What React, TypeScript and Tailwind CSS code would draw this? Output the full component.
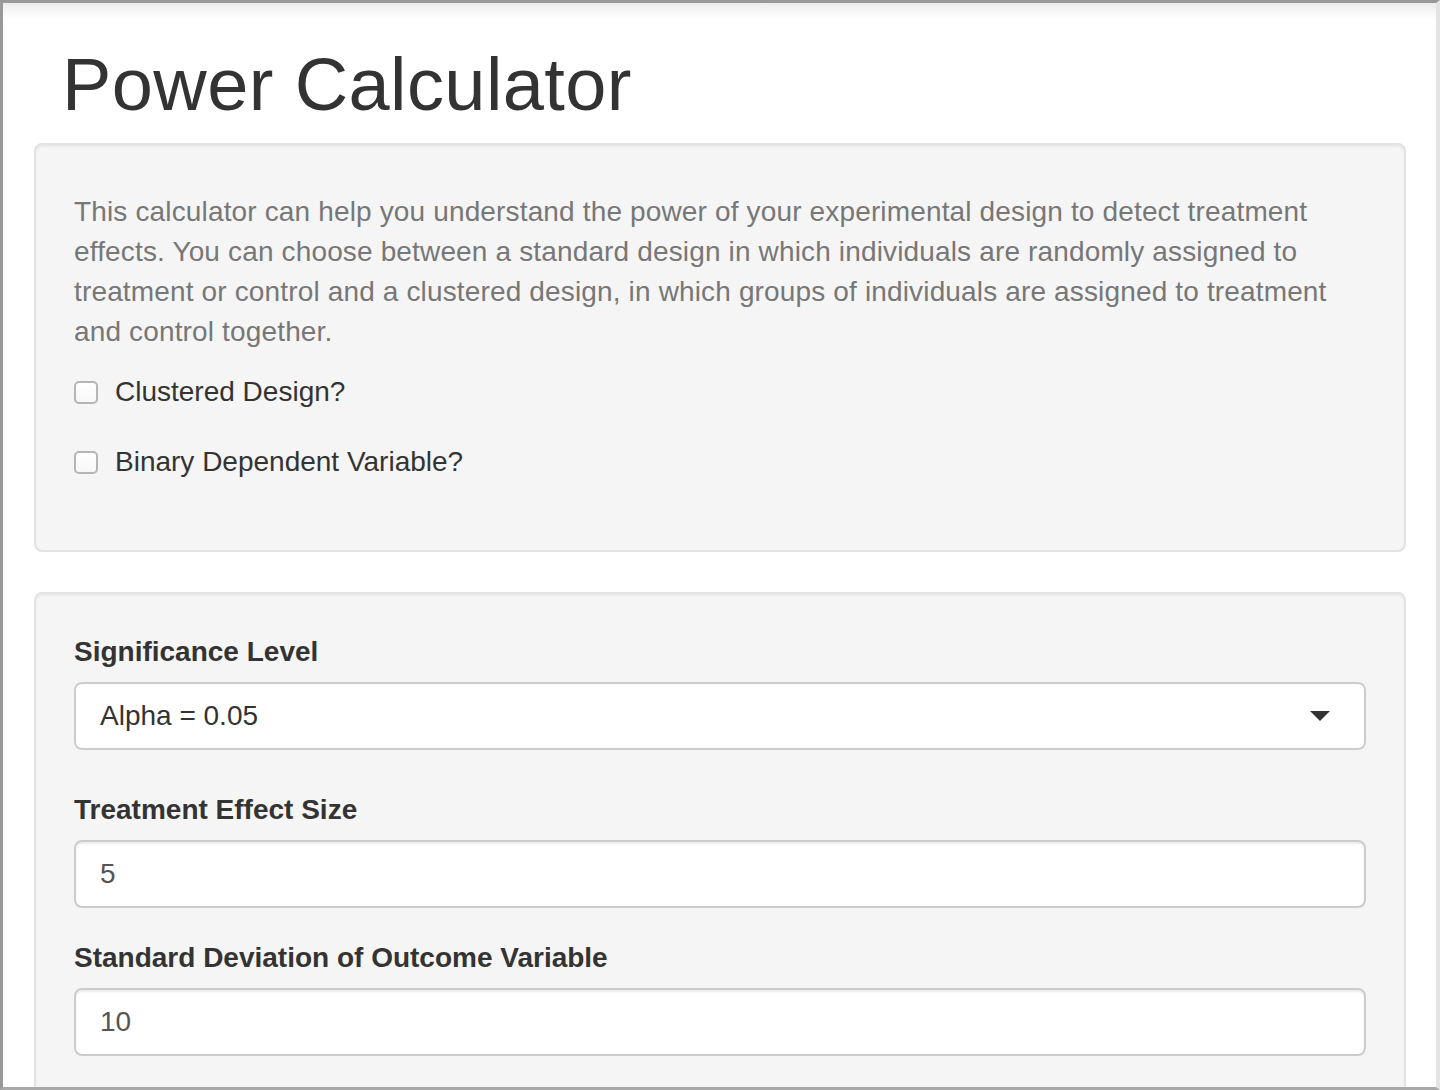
const font = { fontFamily: '"Liberation Sans", Arial, sans-serif' };

function CheckboxRow({ label }: { label: string }) {
  return (
    <label className="flex h-[40px] items-center gap-[17px] text-[28px] leading-[40px] text-[#333]">
      <span className="block h-[23px] w-[24px] rounded-[5px] border-2 border-[#b5b5b5] bg-[linear-gradient(to_bottom,#fff,#f7f7f7)]" />
      <span>{label}</span>
    </label>
  );
}

function Field({ label, children, last }: { label: string; children: React.ReactNode; last?: boolean }) {
  return (
    <div className={last ? '' : 'mb-[30px]'}>
      <div className="mb-[10px] text-[28px] font-bold leading-[40px] text-[#333]">{label}</div>
      {children}
    </div>
  );
}

function TextInput({ value }: { value: string }) {
  return (
    <div className="flex h-[68px] items-center rounded-[8px] border-2 border-[#ccc] bg-white pl-[24px] text-[28px] text-[#555] shadow-[inset_0_2px_2px_rgba(0,0,0,0.075)]">
      {value}
    </div>
  );
}

export default function App() {
  return (
    <div
      style={font}
      className="box-border h-[1090px] w-[1440px] overflow-hidden border-b-[3px] border-l-[3px] border-r-4 border-t-[3px] border-b-[#a9a9a9] border-l-[#999] border-r-[#e4e4e4] border-t-[#999] bg-[linear-gradient(to_bottom,#ececec,#fff_16px)] pl-[31px] pr-[30px]"
    >
      <h1 className="ml-[28px] mb-[19px] pt-[42px] text-[74px] font-normal leading-[79px] tracking-[0.4px] text-[#333]">
        Power Calculator
      </h1>

      {/* Intro */}
      <div className="rounded-[8px] border-2 border-[#e3e3e3] bg-[#f5f5f5] px-[38px] pb-[38px] pt-[47px] shadow-[inset_0_2px_2px_rgba(0,0,0,0.05)]">
        <p className="mb-[20px] whitespace-nowrap text-[28px] leading-[40px] tracking-[0.15px] text-[#777]">
          <span className="block">This calculator can help you understand the power of your experimental design to detect treatment</span>
          <span className="block">effects. You can choose between a standard design in which individuals are randomly assigned to</span>
          <span className="block">treatment or control and a clustered design, in which groups of individuals are assigned to treatment</span>
          <span className="block">and control together.</span>
        </p>
        <div className="flex flex-col gap-[30px] pb-[30px]">
          <CheckboxRow label="Clustered Design?" />
          <CheckboxRow label="Binary Dependent Variable?" />
        </div>
      </div>

      {/* Inputs */}
      <div className="mt-[40px] rounded-[8px] border-2 border-[#e3e3e3] bg-[#f5f5f5] px-[38px] pb-[38px] pt-[38px] shadow-[inset_0_2px_2px_rgba(0,0,0,0.05)]">
        <div className="mb-[40px]">
          <div className="mb-[10px] text-[28px] font-bold leading-[40px] text-[#333]">Significance Level</div>
          <div className="flex h-[68px] items-center justify-between rounded-[8px] border-2 border-[#ccc] bg-white pl-[24px] pr-[34px] text-[28px] text-[#333]">
            <span>Alpha = 0.05</span>
            <span className="block h-0 w-0 border-l-[10px] border-r-[10px] border-t-[10px] border-l-transparent border-r-transparent border-t-[#333]" />
          </div>
        </div>
        <Field label="Treatment Effect Size">
          <TextInput value="5" />
        </Field>
        <Field label="Standard Deviation of Outcome Variable">
          <TextInput value="10" />
        </Field>
      </div>
    </div>
  );
}
